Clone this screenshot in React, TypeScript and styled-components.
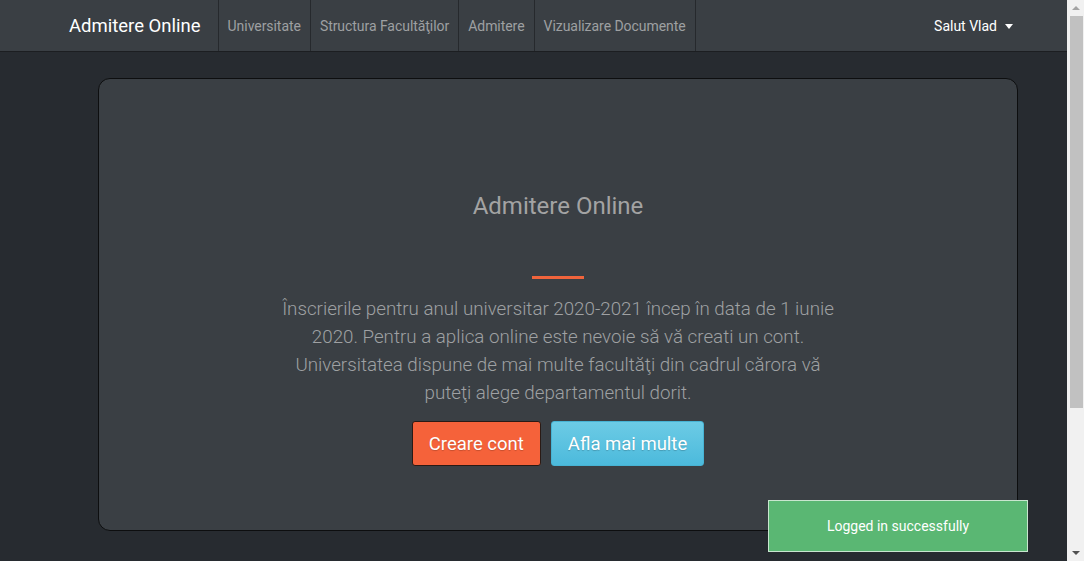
import React from "react";
import styled, { createGlobalStyle } from "styled-components";

const Global = createGlobalStyle`
  html, body { margin: 0; padding: 0; }
  body {
    background: #272b30;
    font-family: Roboto, "Liberation Sans", Arial, sans-serif;
    color: #aaa;
    overflow: hidden;
  }
`;

const Page = styled.div`
  margin-right: 17px;
  min-height: 756px;
`;

const NavBar = styled.nav`
  height: 52px;
  background: #3a3f44;
  border-bottom: 1px solid #1c1e21;
  box-sizing: border-box;
  display: flex;
  align-items: stretch;
  padding-left: 69px;
  padding-right: 54px;
`;

const Brand = styled.a`
  display: flex;
  align-items: center;
  color: #fff;
  font-size: 18.5px;
  margin-right: 17px;
  text-decoration: none;
`;

const NavList = styled.div`
  display: flex;
  align-items: stretch;
  flex: 1;
`;

const NavItem = styled.a<{ $first?: boolean }>`
  display: flex;
  align-items: center;
  padding: 0 9px;
  font-size: 14px;
  letter-spacing: -0.05px;
  color: #9ea0a2;
  text-decoration: none;
  border-right: 1px solid #26292d;
  border-left: ${(p) => (p.$first ? "1px solid #26292d" : "none")};
`;

const User = styled.a`
  display: flex;
  align-items: center;
  gap: 8px;
  color: #fff;
  font-size: 14px;
  text-decoration: none;
`;

const Caret = styled.span`
  width: 0;
  height: 0;
  border-left: 4px solid transparent;
  border-right: 4px solid transparent;
  border-top: 5px solid #fff;
  margin-top: 1px;
`;

const Main = styled.main`
  padding: 26px 0 0 98px;
`;

const Card = styled.section`
  width: 920px;
  box-sizing: border-box;
  height: 453px;
  background: #3a3f44;
  border: 1px solid #0d0e0f;
  border-radius: 12px;
  display: flex;
  flex-direction: column;
  align-items: center;
  padding-top: 113px;
`;

const Title = styled.h1`
  margin: 0;
  font-size: 24px;
  font-weight: 400;
  line-height: 29px;
  color: #a3a3a3;
`;

const Divider = styled.div`
  width: 52px;
  height: 3px;
  background: #f0643c;
  margin-top: 55px;
`;

const Text = styled.p`
  margin: 16px 0 0;
  width: 570px;
  text-align: center;
  font-size: 18.75px;
  font-weight: 300;
  line-height: 28px;
  color: #9fa1a3;
`;

const Buttons = styled.div`
  display: flex;
  gap: 10px;
  margin-top: 14px;
`;

const Button = styled.button<{ $variant: "primary" | "info" }>`
  height: 45px;
  box-sizing: border-box;
  padding: 0 16px;
  font-family: inherit;
  font-size: 18.5px;
  color: #fff;
  border-radius: 3px;
  cursor: pointer;
  text-shadow: 0 1px 1px rgba(0, 0, 0, 0.2);
  background: ${(p) =>
    p.$variant === "primary"
      ? "#f5623a"
      : "linear-gradient(#6ccbe5, #4cbadc)"};
  border: 1px solid ${(p) => (p.$variant === "primary" ? "#2a1a15" : "#47b3d4")};
`;

const Toast = styled.div`
  position: fixed;
  left: 768px;
  top: 500px;
  width: 260px;
  height: 52px;
  box-sizing: border-box;
  background: #5ab773;
  border: 1px solid #c9e6cf;
  color: #fff;
  font-size: 14px;
  display: flex;
  align-items: center;
  justify-content: center;
`;

const ScrollTrack = styled.div`
  position: fixed;
  top: 0;
  right: 0;
  bottom: 0;
  width: 17px;
  background: #f1f1f1;
  display: flex;
  flex-direction: column;
  align-items: stretch;
`;

const ScrollArrow = styled.div<{ $down?: boolean }>`
  height: 16px;
  display: flex;
  align-items: center;
  justify-content: center;
  &::after {
    content: "";
    width: 0;
    height: 0;
    border-left: 4px solid transparent;
    border-right: 4px solid transparent;
    ${(p) =>
      p.$down
        ? "border-top: 4px solid #505050;"
        : "border-bottom: 4px solid #a3a3a3;"}
  }
`;

const ScrollThumb = styled.div`
  height: 392px;
  margin: 0 1px 0 3px;
  background: #c1c1c1;
`;

const ScrollSpacer = styled.div`
  flex: 1;
`;

export default function App() {
  return (
    <>
      <Global />
      <Page>
        <NavBar>
          <Brand href="#">Admitere Online</Brand>
          <NavList>
            <NavItem $first href="#">Universitate</NavItem>
            <NavItem href="#">Structura Facultăţilor</NavItem>
            <NavItem href="#">Admitere</NavItem>
            <NavItem href="#">Vizualizare Documente</NavItem>
          </NavList>
          <User href="#">
            Salut Vlad <Caret />
          </User>
        </NavBar>
        <Main>
          <Card>
            <Title>Admitere Online</Title>
            <Divider />
            <Text>
              Înscrierile pentru anul universitar 2020-2021 încep în data de 1 iunie
              2020. Pentru a aplica online este nevoie să vă creati un cont.
              Universitatea dispune de mai multe facultăţi din cadrul cărora vă
              puteţi alege departamentul dorit.
            </Text>
            <Buttons>
              <Button $variant="primary">Creare cont</Button>
              <Button $variant="info">Afla mai multe</Button>
            </Buttons>
          </Card>
        </Main>
      </Page>
      <Toast>Logged in successfully</Toast>
      <ScrollTrack>
        <ScrollArrow />
        <ScrollThumb />
        <ScrollSpacer />
        <ScrollArrow $down />
      </ScrollTrack>
    </>
  );
}
